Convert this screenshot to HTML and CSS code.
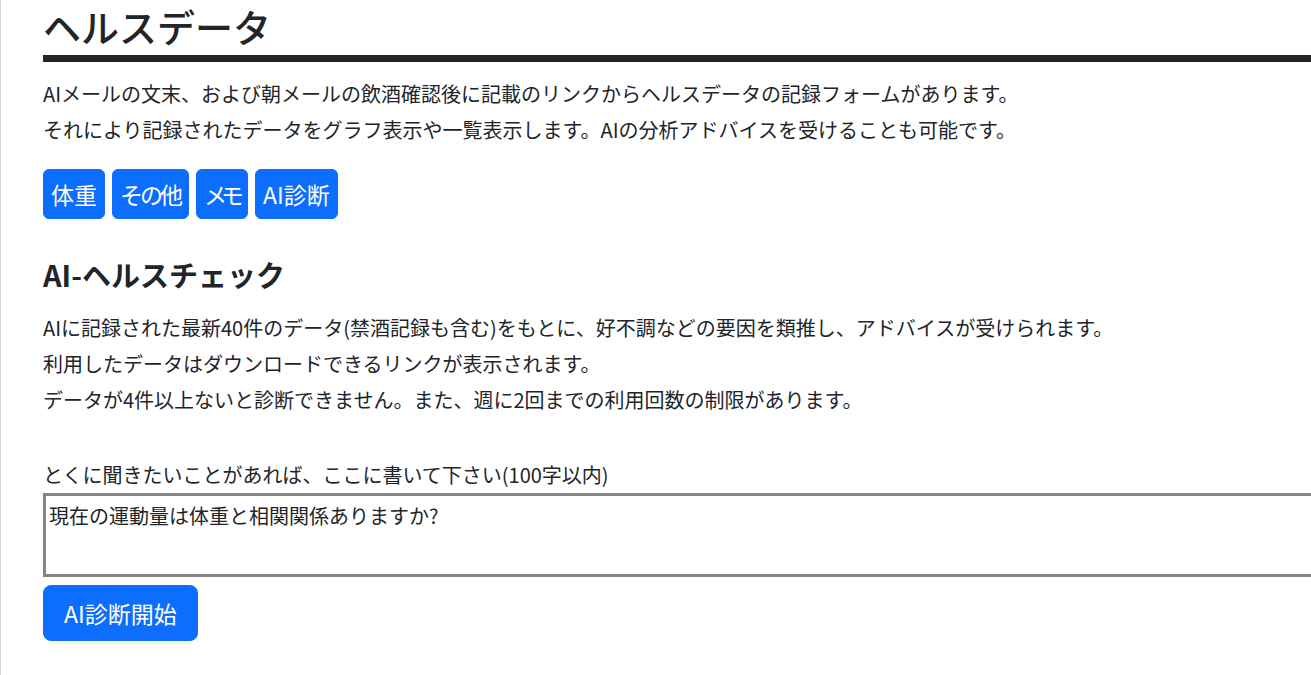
FILE: index.html
```html
<!DOCTYPE html>
<html lang="ja">
<head>
<meta charset="utf-8">
<title>ヘルスデータ</title>
<link rel="stylesheet" href="styles.css">
</head>
<body>
<main class="page">
  <h1 class="title">ヘルスデータ</h1>
  <p class="text">AIメールの文末、および朝メールの飲酒確認後に記載のリンクからヘルスデータの記録フォームがあります。<br>それにより記録されたデータをグラフ表示や一覧表示します。AIの分析アドバイスを受けることも可能です。</p>
  <nav class="tabs">
    <a class="btn" href="#">体重</a>
    <a class="btn btn-kana" href="#">その他</a>
    <a class="btn btn-kana-only" href="#">メモ</a>
    <a class="btn" href="#">AI診断</a>
  </nav>
  <h2 class="subtitle">AI-ヘルスチェック</h2>
  <p class="text">AIに記録された最新40件のデータ(禁酒記録も含む)をもとに、好不調などの要因を類推し、アドバイスが受けられます。<br>利用したデータはダウンロードできるリンクが表示されます。<br>データが4件以上ないと診断できません。また、週に2回までの利用回数の制限があります。</p>
  <form class="form">
    <label class="label" for="q">とくに聞きたいことがあれば、ここに書いて下さい(100字以内)</label>
    <textarea class="area" id="q">現在の運動量は体重と相関関係ありますか?</textarea>
    <button class="btn btn-lg" type="button">AI診断開始</button>
  </form>
</main>
</body>
</html>
```
FILE: styles.css
```css
html, body {
  margin: 0;
  padding: 0;
  background: #fff;
  overflow: hidden;
}
body {
  border-left: 1px solid #d4d4d4;
  min-height: 675px;
  box-sizing: border-box;
  font-family: "Noto Sans CJK JP", "Noto Sans", sans-serif;
  color: #212529;
  font-size: 20px;
}
.page {
  padding-left: 42px;
  padding-top: 4px;
  display: flex;
  flex-direction: column;
  align-items: flex-start;
}
.title {
  margin: 0;
  align-self: stretch;
  font-size: 38px;
  font-weight: 500;
  line-height: 44px;
  padding-bottom: 7px;
  border-bottom: 7px solid #212529;
}
.text {
  margin: 14px 0 0;
  line-height: 36px;
}
.tabs {
  display: flex;
  gap: 7px;
  margin-top: 21px;
}
.btn {
  display: inline-block;
  background: #0d6efd;
  border: 1px solid #0d6efd;
  color: #fff;
  text-decoration: none;
  font-family: inherit;
  font-size: 23px;
  line-height: 32px;
  padding: 8px 7px;
  border-radius: 6px;
}
.btn-kana {
  letter-spacing: -3px;
  padding-right: 8px;
}
.btn-kana-only {
  letter-spacing: -6px;
  padding-right: 9px;
}
.subtitle {
  margin: 38px 0 0;
  font-size: 29px;
  line-height: 35px;
  font-weight: 700;
}
.subtitle + .text {
  margin-top: 18px;
}
.form {
  display: flex;
  flex-direction: column;
  align-items: flex-start;
  align-self: stretch;
  margin-top: 42px;
}
.label {
  line-height: 30px;
  margin-bottom: 3px;
}
.area {
  width: calc(100% + 40px);
  box-sizing: border-box;
  height: 84px;
  border: 3px solid #858585;
  padding: 2px 3px;
  font-family: inherit;
  font-size: 20px;
  line-height: 36px;
  color: #212529;
  resize: none;
}
.btn-lg {
  margin-top: 8px;
  font-size: 23px;
  line-height: 32px;
  padding: 11px 20px;
  border-radius: 8px;
}
```
